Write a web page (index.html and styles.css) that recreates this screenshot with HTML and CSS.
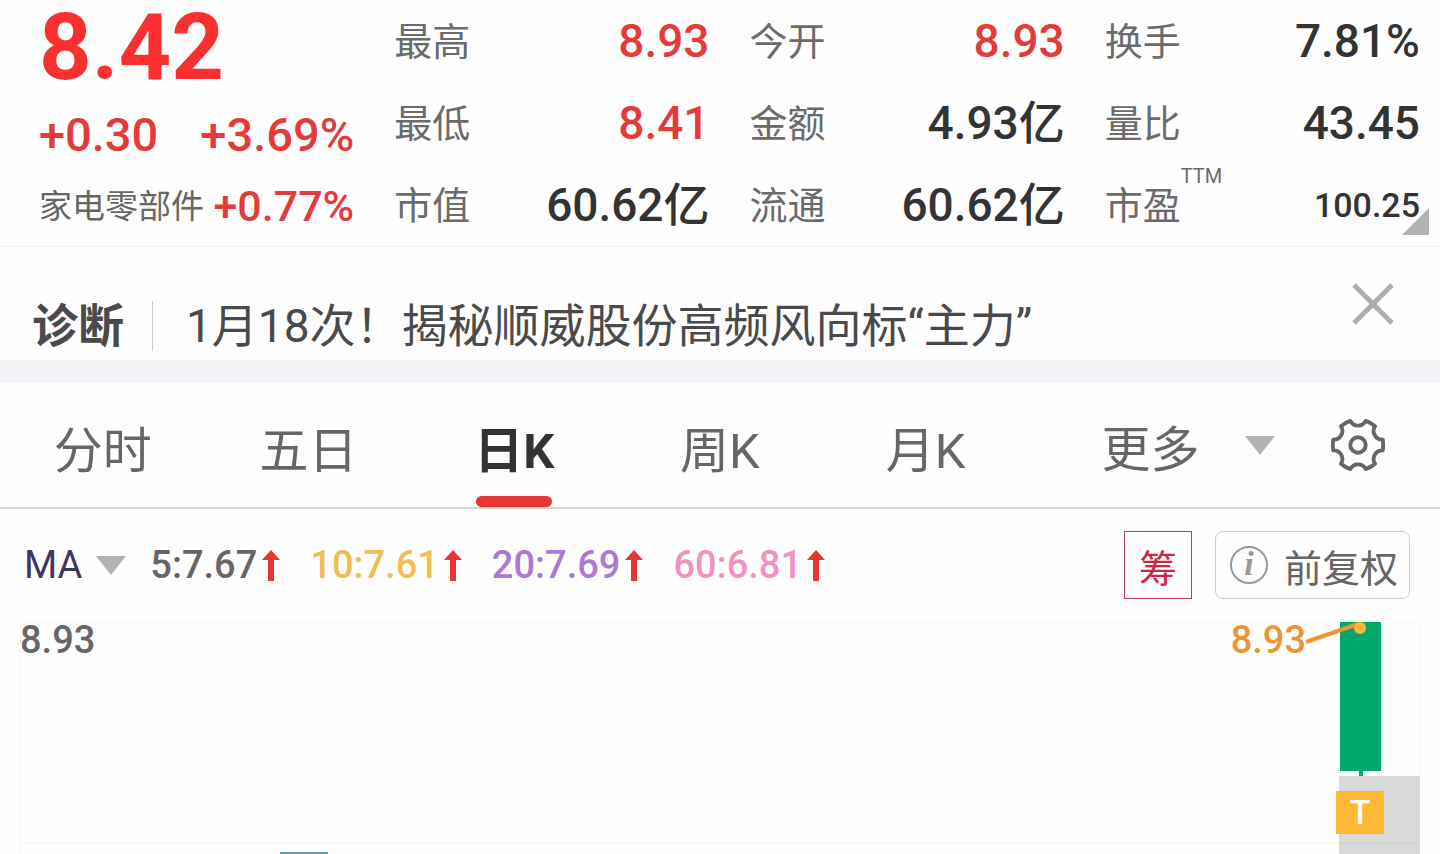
FILE: index.html
```
<!DOCTYPE html>
<html lang="zh-CN">
<head>
    <meta charset="UTF-8">
    <meta name="viewport" content="width=device-width, initial-scale=1.0">
    <title>日K</title>
    <link rel="stylesheet" href="styles.css">
</head>
<body>
    <header class="quote">
        <div class="summary">
            <div class="price">8.42</div>
            <div class="change"><span>+0.30</span><span>+3.69%</span></div>
            <div class="sector"><span class="sector-name">家电零部件</span><span class="sector-change">+0.77%</span></div>
        </div>
        <dl class="stats">
            <div class="stat"><dt>最高</dt><dd class="up">8.93</dd></div>
            <div class="stat"><dt>最低</dt><dd class="up">8.41</dd></div>
            <div class="stat"><dt>市值</dt><dd>60.62<span class="unit">亿</span></dd></div>
        </dl>
        <dl class="stats">
            <div class="stat"><dt>今开</dt><dd class="up">8.93</dd></div>
            <div class="stat"><dt>金额</dt><dd>4.93<span class="unit">亿</span></dd></div>
            <div class="stat"><dt>流通</dt><dd>60.62<span class="unit">亿</span></dd></div>
        </dl>
        <dl class="stats">
            <div class="stat"><dt>换手</dt><dd>7.81%</dd></div>
            <div class="stat"><dt>量比</dt><dd>43.45</dd></div>
            <div class="stat"><dt>市盈<sup class="ttm">TTM</sup></dt><dd class="small">100.25</dd></div>
        </dl>
        <span class="corner"></span>
    </header>

    <section class="notice">
        <strong class="notice-tag">诊断</strong>
        <a class="notice-text" href="#">1月18次！揭秘顺威股份高频风向标“主力”</a>
        <button class="close" type="button" aria-label="关闭">
            <svg width="42" height="42" viewBox="0 0 42 42"><path d="M2 2L40 40M40 2L2 40" fill="none" stroke="#adadad" stroke-width="5"/></svg>
        </button>
    </section>

    <nav class="tabs">
        <button class="tab" type="button">分时</button>
        <button class="tab" type="button">五日</button>
        <button class="tab active" type="button">日K</button>
        <button class="tab" type="button">周K</button>
        <button class="tab" type="button">月K</button>
        <div class="tab-tools">
            <button class="more" type="button">更多<span class="caret"></span></button>
            <button class="settings" type="button" aria-label="设置">
                <svg width="54" height="54" viewBox="-28 -28 56 56" fill="none" stroke="#666" stroke-width="4" stroke-linejoin="round">
                    <path d="M-8 -25A9 9 0 0 0 8 -25Q13 -23.500 17.650 -19.430A9 9 0 0 0 25.650 -5.570Q26.500 0 25.650 5.570A9 9 0 0 0 17.650 19.430Q13 23.500 8 25A9 9 0 0 0 -8 25Q-13 23.500 -17.650 19.430A9 9 0 0 0 -25.650 5.570Q-26.500 0 -25.650 -5.570A9 9 0 0 0 -17.650 -19.430Q-13 -23.500 -8 -25Z"/>
                    <circle r="8"/>
                </svg>
            </button>
        </div>
    </nav>

    <main>
        <div class="toolbar">
            <button class="indicator" type="button">MA<span class="caret"></span></button>
            <div class="averages">
                <span class="ma ma5">5:7.67<svg class="arrow" width="18" height="31" viewBox="0 0 18 31"><path d="M9 0L18 10H12V31H6V10H0Z"/></svg></span>
                <span class="ma ma10">10:7.61<svg class="arrow" width="18" height="31" viewBox="0 0 18 31"><path d="M9 0L18 10H12V31H6V10H0Z"/></svg></span>
                <span class="ma ma20">20:7.69<svg class="arrow" width="18" height="31" viewBox="0 0 18 31"><path d="M9 0L18 10H12V31H6V10H0Z"/></svg></span>
                <span class="ma ma60">60:6.81<svg class="arrow" width="18" height="31" viewBox="0 0 18 31"><path d="M9 0L18 10H12V31H6V10H0Z"/></svg></span>
            </div>
            <button class="chips" type="button">筹</button>
            <button class="adjust" type="button"><span class="info">i</span>前复权</button>
        </div>

        <div class="chart">
            <span class="axis-max">8.93</span>
            <div class="ma-segment"></div>
            <div class="gap-zone"></div>
            <div class="gridline"></div>
            <div class="wick"></div>
            <div class="candle"></div>
            <span class="high-label">8.93</span>
            <svg class="pointer" width="64" height="24" viewBox="0 0 64 24"><path d="M2 20L54 2" stroke="#ed9532" stroke-width="4"/><circle cx="56" cy="6" r="6" fill="#ffb83d"/></svg>
            <span class="trade-mark">T</span>
        </div>
    </main>
</body>
</html>
```
FILE: styles.css
```
* {
    box-sizing: border-box;
}
body {
    margin: 0;
    min-height: 100vh;
    display: flex;
    flex-direction: column;
    background-color: #fefefe;
    color: #333;
    font-family: Roboto, "Noto Sans CJK SC", sans-serif;
}
button {
    padding: 0;
    border: none;
    background: none;
    color: #666;
    font-family: inherit;
    cursor: pointer;
}
svg {
    display: block;
}

/* quote header */
.quote {
    position: relative;
    display: grid;
    grid-template-columns: repeat(4, 1fr);
    column-gap: 40px;
    padding: 0 20px 0 39px;
    border-bottom: 1px solid #ececec;
}
.summary {
    display: flex;
    flex-direction: column;
    color: #e33a3a;
    font-weight: 500;
    white-space: nowrap;
}
.price {
    height: 96px;
    line-height: 96px;
    font-size: 92px;
    font-weight: 700;
    color: #fa3030;
}
.change {
    display: flex;
    justify-content: space-between;
    height: 78px;
    line-height: 78px;
    font-size: 47px;
}
.sector {
    display: flex;
    justify-content: space-between;
    height: 64px;
    line-height: 64px;
}
.sector-name {
    font-size: 33px;
    line-height: 66px;
    font-weight: 400;
    color: #666;
}
.sector-change {
    font-size: 43px;
}
.stats {
    margin: 0;
}
.stat {
    display: flex;
    justify-content: space-between;
    height: 82px;
    line-height: 82px;
    white-space: nowrap;
}
.stat dt {
    position: relative;
    font-size: 38px;
    line-height: 84px;
    color: #6b6b6b;
}
.stat dd {
    margin: 0;
    font-size: 46px;
    font-weight: 500;
}
.stat dd.up {
    color: #e33a3a;
}
.stat dd.small {
    font-size: 34px;
}
.unit {
    line-height: 1;
}
.ttm {
    position: absolute;
    left: 100%;
    top: 0;
    font-size: 20px;
    line-height: 24px;
}
.corner {
    position: absolute;
    right: 11px;
    bottom: 11px;
    border-left: 27px solid transparent;
    border-bottom: 27px solid #b3b3b3;
}

/* notice */
.notice {
    display: flex;
    align-items: center;
    height: 113px;
    padding: 44px 46px 0 32px;
    font-size: 46px;
    line-height: 50px;
    color: #4a4a4a;
}
.notice-tag {
    padding-right: 28px;
    border-right: 1px solid #ccc;
}
.notice-text {
    flex: 1;
    padding-left: 33px;
    color: inherit;
    text-decoration: none;
    white-space: nowrap;
}
.close {
    align-self: flex-start;
    margin-top: -8px;
}

/* period tabs */
.tabs {
    display: grid;
    grid-template-columns: repeat(7, 1fr);
    height: 149px;
    border-top: 23px solid #f3f4f8;
    border-bottom: 2px solid #d6d6d6;
}
.tab,
.more {
    font-size: 49px;
}
.tab {
    position: relative;
    padding-top: 2px;
}
.tab.active {
    color: #333;
    font-weight: 700;
}
.tab.active::after {
    content: "";
    position: absolute;
    left: 50%;
    bottom: 0;
    width: 76px;
    height: 11px;
    margin-left: -38px;
    border-radius: 6px;
    background-color: #e83535;
}
.tab-tools {
    grid-column: span 2;
    display: flex;
    align-items: center;
    justify-content: space-between;
    padding: 0 55px 0 73px;
}
.more,
.indicator {
    display: flex;
    align-items: center;
}
.caret {
    border: 15px solid transparent;
    border-top: 19px solid #b3b3b3;
    border-bottom: none;
}
.more .caret {
    margin-left: 45px;
}

/* indicator row */
main {
    flex: 1;
    display: flex;
    flex-direction: column;
}
.toolbar {
    display: flex;
    align-items: center;
    height: 113px;
    padding: 0 30px 1px 24px;
}
.indicator {
    font-size: 38px;
    color: #3d3760;
}
.indicator .caret {
    margin-left: 14px;
}
.averages {
    flex: 1;
    display: flex;
    gap: 30px;
    padding-left: 24px;
    font-size: 38px;
    font-weight: 500;
}
.ma {
    display: flex;
    align-items: center;
    gap: 5px;
}
.ma5 {
    color: #666;
}
.ma10 {
    color: #f0bd57;
}
.ma20 {
    color: #ad78d4;
}
.ma60 {
    color: #f291c0;
}
.arrow {
    fill: #e63535;
}
.chips,
.adjust {
    height: 68px;
    font-size: 38px;
}
.chips {
    width: 68px;
    border: 1px solid #b8425a;
    color: #cc2844;
}
.adjust {
    display: flex;
    align-items: center;
    gap: 16px;
    margin-left: 23px;
    padding: 0 11px 0 14px;
    border: 1px solid #ccc;
    border-radius: 8px;
}
.info {
    width: 38px;
    height: 38px;
    border: 2px solid #999;
    border-radius: 50%;
    color: #999;
    font: italic bold 34px/32px "Liberation Serif", serif;
}

/* chart, everything on it is placed on the canvas */
.chart {
    position: relative;
    flex: 1;
    min-height: 232px;
    margin: 0 20px;
    border: 1px solid #f6f6f6;
    border-bottom: none;
}
.chart > * {
    position: absolute;
}
.axis-max,
.high-label {
    top: -6px;
    font-size: 38px;
    line-height: 46px;
    font-weight: 500;
}
.axis-max {
    left: -1px;
    color: #666;
}
.high-label {
    right: 113px;
    color: #ed9532;
}
.gridline {
    top: 219px;
    left: 0;
    right: 0;
    height: 2px;
    background-color: rgba(128, 128, 128, 0.06);
}
.ma-segment {
    top: 229px;
    left: 259px;
    width: 48px;
    height: 2px;
    background-color: #5f9cae;
}
.gap-zone {
    top: 153px;
    right: -1px;
    bottom: 0;
    width: 81px;
    background-color: #d9d9d9;
}
.wick {
    top: 148px;
    right: 56px;
    width: 4px;
    height: 5px;
    background-color: #00a86b;
}
.candle {
    top: -1px;
    right: 38px;
    width: 41px;
    height: 149px;
    background-color: #00a96b;
}
.pointer {
    top: -1px;
    right: 51px;
}
.trade-mark {
    top: 168px;
    right: 35px;
    width: 48px;
    height: 43px;
    background-color: #ffb836;
    color: #fff;
    font-size: 34px;
    font-weight: 500;
    line-height: 43px;
    text-align: center;
}
```
